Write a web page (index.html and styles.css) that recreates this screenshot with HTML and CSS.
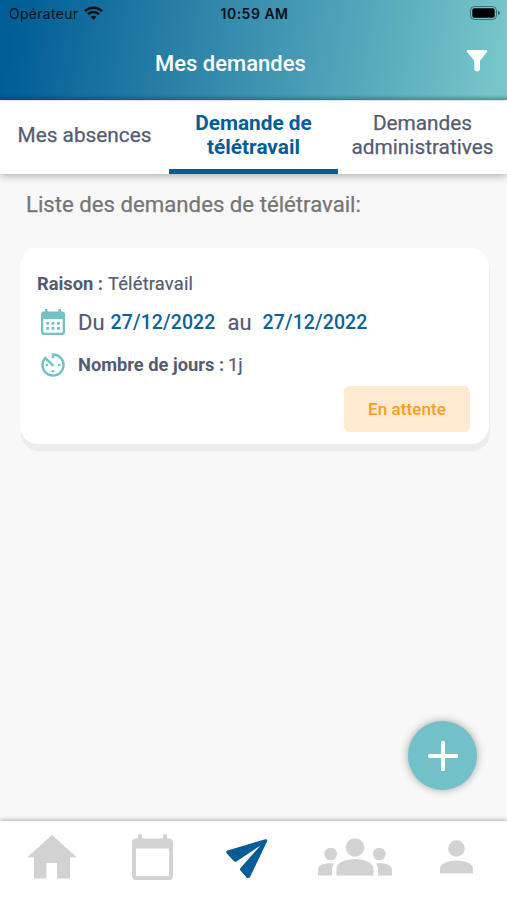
FILE: index.html
```html
<!DOCTYPE html>
<html lang="fr">
<head>
	<meta charset="utf-8">
	<title>Mes demandes</title>
	<link rel="stylesheet" href="styles.css">
</head>

<body>

<header>
	<div class="status-bar">
		<div class="carrier">
			<span>Opérateur</span>
			<svg class="wifi" viewBox="0 0 18 13">
				<path d="M1 4.8A11.3 11.3 0 0 1 17 4.8M3.8 7.7A7.4 7.4 0 0 1 14.2 7.7" fill="none" stroke="#061018" stroke-width="2.4"/>
				<path d="M6.3 10.2A4.4 4.4 0 0 1 11.7 10.2L9 13Z" fill="#061018"/>
			</svg>
		</div>
		<span class="time">10:59 AM</span>
		<svg class="battery" viewBox="0 0 30 14">
			<rect x=".5" y=".5" width="26" height="13" rx="4" fill="none" stroke="#001014" stroke-opacity=".45"/>
			<rect x="2.3" y="2.3" width="22.4" height="9.4" rx="2"/>
			<path d="M28 4.7Q30 5.5 30 7T28 9.3Z" fill-opacity=".5"/>
		</svg>
	</div>
	<div class="title-bar">
		<h1>Mes demandes</h1>
		<svg class="filter" viewBox="0 0 22 22">
			<path d="M1.5 0H20.5Q22 .7 21 2L14 10.7V19.5Q13.3 21.5 11.2 21.5T8.3 19.5V10.7L1 2Q0 .7 1.5 0Z" fill="#fff"/>
		</svg>
	</div>
</header>

<nav class="tabs">
	<div class="tab"><span>Mes absences</span></div>
	<div class="tab active"><span>Demande de<br>télétravail</span></div>
	<div class="tab"><span>Demandes<br>administratives</span></div>
</nav>

<main>
	<h2>Liste des demandes de télétravail:</h2>

	<div class="card">
		<div class="row reason"><b>Raison :</b><span>Télétravail</span></div>
		<div class="row dates">
			<svg viewBox="0 0 24 27">
				<path d="M4 0H6.5V2.5H17.5V0H20V2.5H21Q24 2.5 24 5.5V23Q24 26 21 26H3Q0 26 0 23V5.5Q0 2.5 3 2.5H4ZM2.3 10V22.5Q2.3 23.8 3.6 23.8H20.4Q21.7 23.8 21.7 22.5V10Z" fill="#72c1c4" fill-rule="evenodd"/>
				<path d="M5.2 13H8V15.8H5.2ZM10.6 13H13.4V15.8H10.6ZM16 13H18.8V15.8H16ZM5.2 18H8V20.8H5.2ZM10.6 18H13.4V20.8H10.6ZM16 18H18.8V20.8H16Z" fill="#72c1c4"/>
			</svg>
			<span class="word">Du</span>
			<span class="date">27/12/2022</span>
			<span class="word au">au</span>
			<span class="date">27/12/2022</span>
		</div>
		<div class="row days">
			<svg viewBox="0 0 24 24">
				<path d="M12 5.3V1.5A10.5 10.5 0 1 1 4.2 5L12.5 12.8" fill="none" stroke="#72c1c4" stroke-width="2.5"/>
				<circle cx="12" cy="18.3" r="1.3" fill="#72c1c4"/>
				<circle cx="18.2" cy="12" r="1.3" fill="#72c1c4"/>
				<circle cx="5.8" cy="12" r="1.3" fill="#72c1c4"/>
			</svg>
			<b>Nombre de jours :</b><span>1j</span>
		</div>
		<div class="status"><span>En attente</span></div>
	</div>

	<div class="add">
		<svg viewBox="0 0 30 30">
			<path d="M15 1.8V28.2M1.8 15H28.2" stroke="#fff" stroke-width="4" stroke-linecap="round"/>
		</svg>
	</div>
</main>

<footer>
	<svg class="home" viewBox="0 0 50 44">
		<path d="M25 0L50 22.5H43V43.5H30V28H19.5V43.5H7V22.5H0Z"/>
	</svg>
	<svg class="calendar" viewBox="0 0 41 46">
		<path d="M6 2Q6 0 8 0T10 2V4.5H31V2Q31 0 33 0T35 2V4.5H37Q41 4.5 41 9V41.5Q41 46 37 46H4Q0 46 0 41.5V9Q0 4.5 4 4.5H6ZM4 14.5V42H37V14.5Z" fill-rule="evenodd"/>
	</svg>
	<svg class="send" viewBox="0 0 42 40">
		<path d="M39.5.2Q42 0 41 2.5L24 38Q22.5 40 20.5 38.5L14.5 31.5Q13.5 30.5 14.5 29L34.5 6.5L10.5 22.5Q9 23.3 7.8 22L.8 14.5Q-.8 12.5 1.5 11.5Z"/>
	</svg>
	<svg class="team" viewBox="0 0 74 38">
		<circle cx="37" cy="9.5" r="9.3"/>
		<circle cx="12.7" cy="16" r="6.3"/>
		<circle cx="61.3" cy="16" r="6.3"/>
		<path d="M18.5 37.5V31C18.5 17.5 55.5 17.5 55.5 31V37.5ZM0 37.5V32C0 27 6.5 24.5 16 25.5Q14 28 14 31V37.5ZM74 37.5V32C74 27 67.5 24.5 58 25.5Q60 28 60 31V37.5Z"/>
	</svg>
	<svg class="user" viewBox="0 0 33 34">
		<circle cx="16.5" cy="8.5" r="8.3"/>
		<path d="M0 33.5V29C0 17.5 33 17.5 33 29V33.5Z"/>
	</svg>
</footer>

</body>

</html>
```
FILE: styles.css
```css
* {
	box-sizing: border-box;
}

body {
	display: flex;
	flex-direction: column;
	height: 900px;
	margin: 0;
	background: #f8f8f8;
	color: #555b70;
	font-family: Roboto, 'Liberation Sans', sans-serif;
	overflow: hidden;
}

svg {
	display: block;
	flex: none;
}

h1,
h2 {
	margin: 0;
	font-weight: 500;
}

span,
b,
h1,
h2 {
	white-space: nowrap;
}

header {
	flex: none;
	height: 100px;
	background: linear-gradient(to top, rgba(0, 30, 50, 0.25), transparent 5px), linear-gradient(100deg, #005d96 3%, #3b91af 50%, #76c5c9 97%);
}

.status-bar {
	display: grid;
	grid-template-columns: 1fr auto 1fr;
	align-items: center;
	height: 27px;
	padding: 0 7px 0 9px;
	color: #061018;
	font-family: Inter, sans-serif;
	font-size: 13.8px;
}

.carrier {
	display: flex;
	align-items: center;
	gap: 6px;
	letter-spacing: 0.4px;
}

.wifi {
	width: 19px;
	height: 14px;
	margin-top: -2px;
}

.time {
	font-size: 14px;
	font-weight: 600;
	letter-spacing: 0.5px;
}

.battery {
	width: 30px;
	height: 14px;
	margin-top: -1px;
	justify-self: end;
}

.title-bar {
	display: flex;
	align-items: center;
	justify-content: space-between;
	height: 73px;
	padding: 0 19px 0 155px;
}

.title-bar h1 {
	margin-top: 1px;
	color: #fff;
	font-size: 22px;
	line-height: 26px;
}

.filter {
	width: 22px;
	height: 22px;
	margin-bottom: 5px;
}

.tabs {
	display: flex;
	flex: none;
	height: 73px;
	margin-top: 1px;
	background: #fff;
	box-shadow: 0 2px 8px rgba(0, 0, 0, 0.3);
}

.tab {
	display: flex;
	align-items: center;
	justify-content: center;
	flex: 1;
	padding-bottom: 5px;
	font-size: 20.8px;
	line-height: 24px;
	text-align: center;
	-webkit-text-stroke: 0.25px;
}

.tab.active {
	padding-bottom: 0;
	border-bottom: 5px solid #045d96;
	color: #045d96;
	font-weight: 700;
	-webkit-text-stroke: 0;
}

main {
	display: flex;
	flex-direction: column;
	flex: 1;
	padding: 17px 18px 31px 20px;
}

h2 {
	padding-left: 6px;
	color: #757575;
	font-size: 22.2px;
	font-weight: 400;
	line-height: 26px;
	-webkit-text-stroke: 0.25px;
}

.card {
	display: flex;
	flex-direction: column;
	height: 196px;
	margin-top: 31px;
	padding: 24px 19px 12px 17px;
	border-radius: 18px;
	background: #fff;
	box-shadow: 1px 7px 1px #ececec;
}

.row {
	display: flex;
	align-items: center;
	font-size: 18.3px;
}

.row span {
	-webkit-text-stroke: 0.2px;
}

.reason {
	gap: 5px;
	height: 24px;
}

.reason span {
	letter-spacing: 0.2px;
}

.dates {
	height: 54px;
}

.dates svg {
	width: 24px;
	height: 27px;
	margin: 0 13px 0 4px;
}

.word {
	font-size: 22px;
}

.row .date {
	margin-left: 6px;
	color: #0c6299;
	font-size: 19.5px;
	font-weight: 500;
	letter-spacing: 0.1px;
	-webkit-text-stroke: 0;
}

.au {
	margin: 0 5px 0 12px;
}

.days {
	height: 31px;
}

.days svg {
	width: 24px;
	height: 24px;
	margin: 0 13px 0 4px;
}

.days b {
	margin-right: 4px;
}

.status {
	display: flex;
	align-items: center;
	justify-content: center;
	align-self: flex-end;
	width: 126px;
	height: 46px;
	margin-top: 6px;
	border-radius: 6px;
	background: #ffe9cf;
	color: #ff9d1d;
	font-size: 17px;
	font-weight: 500;
	letter-spacing: 0.1px;
}

.add {
	display: flex;
	align-items: center;
	justify-content: center;
	align-self: flex-end;
	width: 69px;
	height: 69px;
	margin: auto 12px 0 0;
	border-radius: 50%;
	background: #72c1c9;
	box-shadow: 0 0 9px rgba(0, 0, 0, 0.35);
}

.add svg {
	width: 30px;
	height: 30px;
}

footer {
	display: flex;
	align-items: flex-start;
	flex: none;
	height: 79px;
	padding: 0 34px 0 27px;
	background: #fff;
	box-shadow: 0 -1px 4px rgba(0, 0, 0, 0.3);
	fill: #d2d2d2;
}

.home {
	width: 50px;
	height: 44px;
	margin-top: 14px;
}

.calendar {
	width: 41px;
	height: 46px;
	margin: 13px 0 0 55px;
}

.send {
	width: 42px;
	height: 40px;
	margin: 18px 0 0 53px;
	fill: #045d96;
}

.team {
	width: 74px;
	height: 38px;
	margin: 17px 0 0 50px;
}

.user {
	width: 33px;
	height: 34px;
	margin: 19px 0 0 48px;
}
```
